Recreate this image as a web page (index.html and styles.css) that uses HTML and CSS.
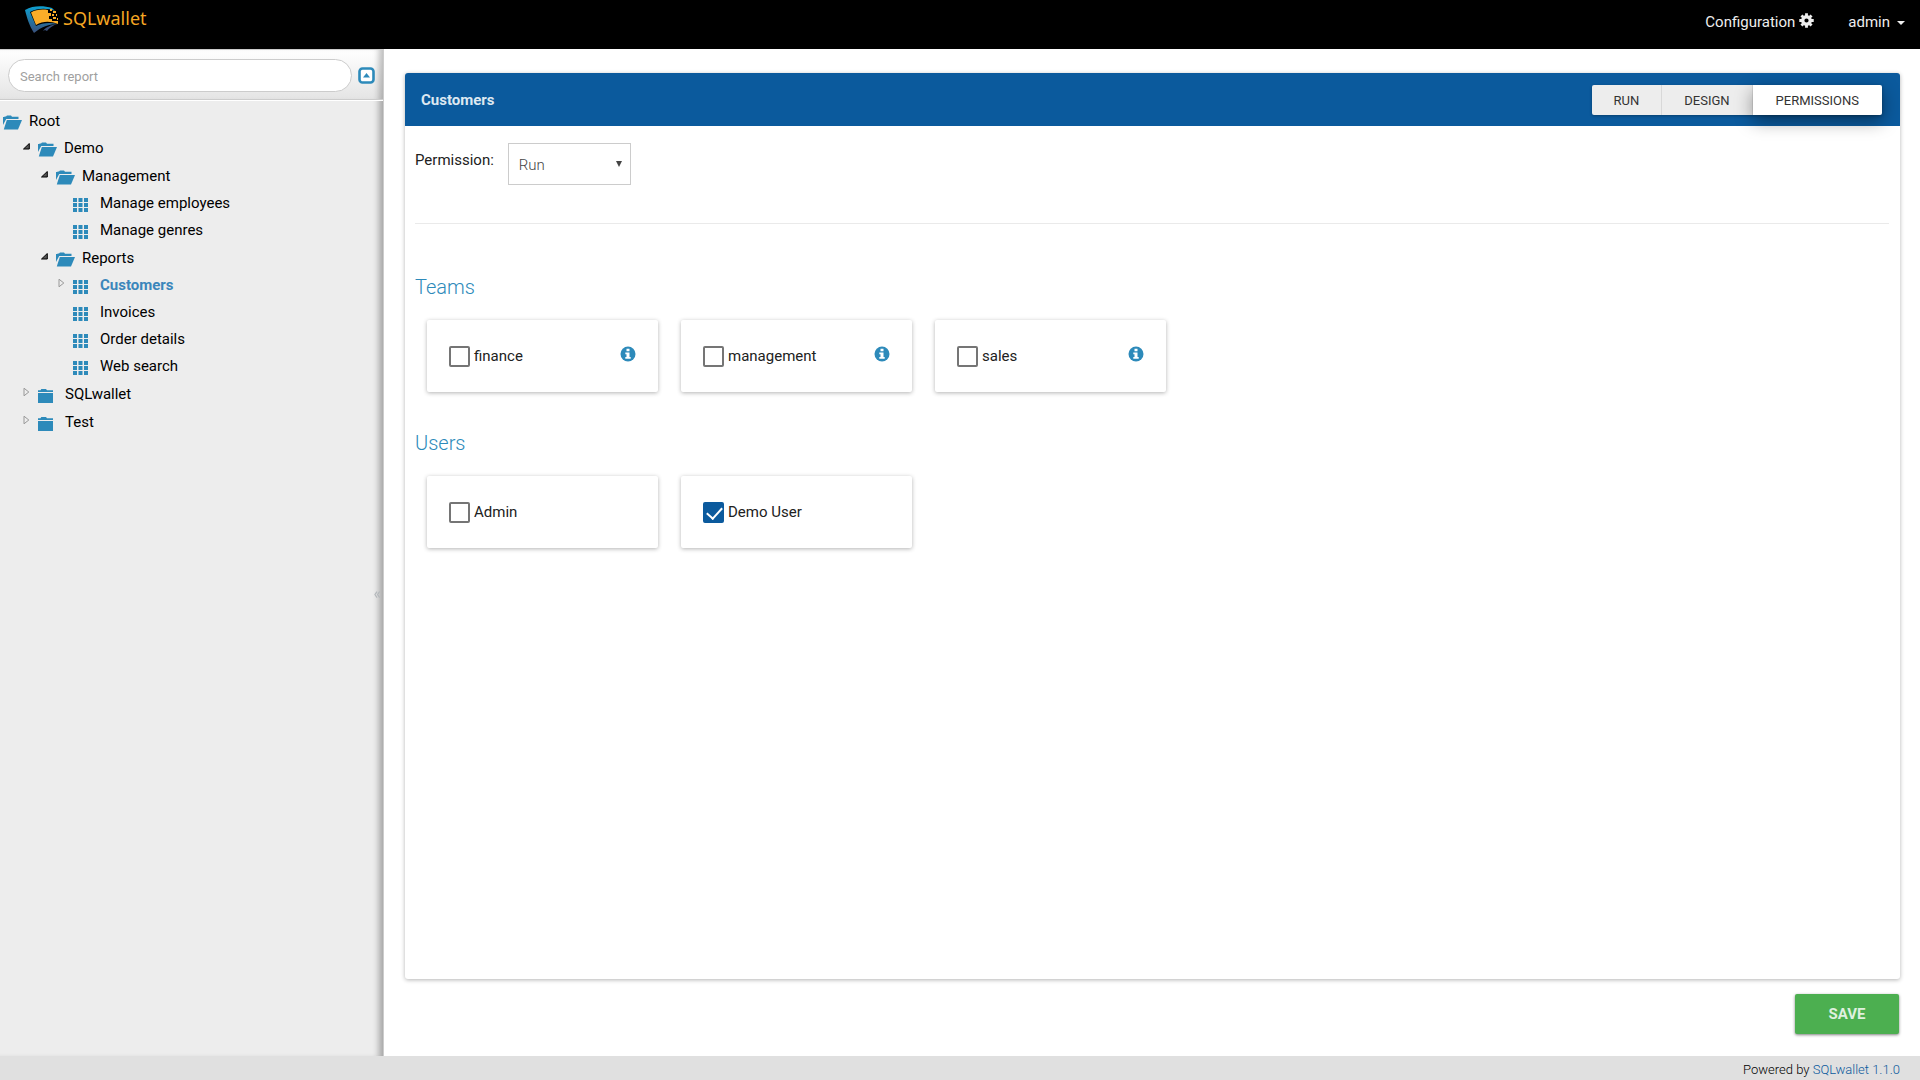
FILE: index.html
```html
<!DOCTYPE html>
<html lang="en">
<head>
<meta charset="utf-8">
<title>SQLwallet</title>
<link rel="stylesheet" href="styles.css">
</head>
<body>
<svg width="0" height="0" class="sprite" aria-hidden="true">
  <symbol id="folder-open" viewBox="0 0 19 15"><path d="M0 10V2h1.500V1.500h1.500L4 .5h4l1 1.300h6.500V4H3.200z"/><path d="M3.800 5H19l-4 9.500H.8z"/></symbol>
  <symbol id="folder" viewBox="0 0 15 14"><path d="M0 3V1.200h2.500L3.300 0H8l1 1.200h6V3zM0 4h15v10H0z"/></symbol>
  <symbol id="grid" viewBox="0 0 15 14"><path d="M0 0h4v4H0zM5.500 0h4v4h-4zM11 0h4v4h-4zM0 5h4v4H0zM5.500 5h4v4h-4zM11 5h4v4h-4zM0 10h4v4H0zM5.500 10h4v4h-4zM11 10h4v4h-4z"/></symbol>
  <symbol id="arrow-open" viewBox="0 0 7 7"><path d="M6.300.5V6H.5z" fill="#555" stroke="#000"/></symbol>
  <symbol id="arrow-closed" viewBox="0 0 7 10"><path d="M1 1.200v7.600L5.800 5z" fill="none" stroke="#999"/></symbol>
  <symbol id="info" viewBox="0 0 16 16"><circle cx="8" cy="8" r="7.500"/><path d="M6.500 2.800h3v2.400h-3zM5.300 6.500h4.200v4.600h1.200v1.700H5.300v-1.700h1.200V8.200H5.300z" fill="#fff"/></symbol>
</svg>

<header class="topbar">
  <a class="brand" href="#">
    <svg class="brand-mark" viewBox="0 0 34 28" aria-hidden="true">
      <defs><linearGradient id="wallet" x1="0" y1="0" x2="0" y2="1"><stop offset="0" stop-color="#0e9fd0"/><stop offset="1" stop-color="#3a4f7a"/></linearGradient></defs>
      <path d="M0 4C8-.5 18-.5 27 2l3 3C22 2 13 2 5 6l6 14c6-3 13-4 22-2-9 0-17 3-24 9C4 19 2 12 0 4z" fill="url(#wallet)"/>
      <path d="M18 25c3-4 8-6 14-7-5 2-8 4-10 7l-2-1z" fill="#3a4f7a"/>
      <path d="M6 6.500c5-3 11-3.500 17-2.500v3h3v3h-2v3h3v2h6v3c-8-3-15-3-22 1z" fill="#fbae29"/>
      <path d="M25 3h2v2h-2zM28 5h3v2h-3zM27 8h2v2h-2zM31 8h1v2h-1zM28 11h3v2h-3zM32 12h1v2h-1z" fill="#fbae29"/>
    </svg>
    <span>SQLwallet</span>
  </a>
  <nav class="top-links">
    <a href="#">Configuration
      <svg class="gear" viewBox="0 0 16 16" aria-hidden="true"><circle cx="8" cy="8" r="4" fill="none" stroke="currentColor" stroke-width="3.500"/><path d="M8 .3v3M8 12.700v3M.3 8h3M12.700 8h3M2.600 2.600l2 2M11.400 11.400l2 2M2.600 13.400l2-2M11.400 4.600l2-2" stroke="currentColor" stroke-width="3"/></svg>
    </a>
    <a href="#">admin <i class="caret"></i></a>
  </nav>
</header>

<div class="workspace">
  <aside class="sidebar">
    <form class="search">
      <input type="text" placeholder="Search report" aria-label="Search report">
      <button type="button" aria-label="Collapse all">
        <svg viewBox="0 0 17 17" aria-hidden="true"><rect x="1.500" y="1.500" width="14" height="14" rx="3" fill="#fff" stroke="currentColor" stroke-width="2.600"/><path d="M5 10.500h7L8.500 6z" fill="currentColor"/></svg>
      </button>
    </form>
    <ul class="tree">
      <li class="folder"><a href="#"><svg class="open"><use href="#folder-open"/></svg>Root</a>
        <ul>
          <li class="folder"><a href="#"><svg class="arrow"><use href="#arrow-open"/></svg><svg class="open"><use href="#folder-open"/></svg>Demo</a>
            <ul>
              <li class="folder"><a href="#"><svg class="arrow"><use href="#arrow-open"/></svg><svg class="open"><use href="#folder-open"/></svg>Management</a>
                <ul>
                  <li><a href="#"><i class="arrow"></i><svg><use href="#grid"/></svg>Manage employees</a></li>
                  <li><a href="#"><i class="arrow"></i><svg><use href="#grid"/></svg>Manage genres</a></li>
                </ul>
              </li>
              <li class="folder"><a href="#"><svg class="arrow"><use href="#arrow-open"/></svg><svg class="open"><use href="#folder-open"/></svg>Reports</a>
                <ul>
                  <li><a href="#" class="current"><svg class="arrow closed"><use href="#arrow-closed"/></svg><svg><use href="#grid"/></svg>Customers</a></li>
                  <li><a href="#"><i class="arrow"></i><svg><use href="#grid"/></svg>Invoices</a></li>
                  <li><a href="#"><i class="arrow"></i><svg><use href="#grid"/></svg>Order details</a></li>
                  <li><a href="#"><i class="arrow"></i><svg><use href="#grid"/></svg>Web search</a></li>
                </ul>
              </li>
            </ul>
          </li>
          <li class="folder"><a href="#"><svg class="arrow closed"><use href="#arrow-closed"/></svg><svg><use href="#folder"/></svg>SQLwallet</a></li>
          <li class="folder"><a href="#"><svg class="arrow closed"><use href="#arrow-closed"/></svg><svg><use href="#folder"/></svg>Test</a></li>
        </ul>
      </li>
    </ul>
    <button class="collapse" type="button" aria-label="Hide sidebar"><svg viewBox="0 0 5 6" aria-hidden="true"><path d="M2.500.5L.8 3l1.700 2.500M4.700.5L3 3l1.700 2.500" fill="none" stroke="#b4b8bc"/></svg></button>
  </aside>

  <main class="main">
    <section class="panel">
      <div class="panel-head">
        <h1>Customers</h1>
        <div class="tabs">
          <button type="button">RUN</button>
          <button type="button">DESIGN</button>
          <button type="button" class="active">PERMISSIONS</button>
        </div>
      </div>
      <div class="panel-body">
        <div class="permission">
          <label for="permission">Permission:</label>
          <div class="select"><select id="permission"><option>Run</option></select></div>
        </div>
        <h2>Teams</h2>
        <div class="cards">
          <div class="card"><label><input type="checkbox">finance</label><svg class="info"><use href="#info"/></svg></div>
          <div class="card"><label><input type="checkbox">management</label><svg class="info"><use href="#info"/></svg></div>
          <div class="card"><label><input type="checkbox">sales</label><svg class="info"><use href="#info"/></svg></div>
        </div>
        <h2>Users</h2>
        <div class="cards">
          <div class="card"><label><input type="checkbox">Admin</label></div>
          <div class="card"><label><input type="checkbox" checked>Demo User</label></div>
        </div>
      </div>
    </section>
    <button class="save" type="button">SAVE</button>
  </main>
</div>

<footer class="footer">Powered by <a href="#">SQLwallet 1.1.0</a></footer>
</body>
</html>
```
FILE: styles.css
```css
* { box-sizing: border-box; }

body {
  margin: 0;
  min-height: 100vh;
  display: flex;
  flex-direction: column;
  font: 15px/20px Roboto, sans-serif;
  color: #212121;
  background: #fff;
}

a { color: inherit; text-decoration: none; }
button, input, select { font: inherit; color: inherit; }
ul { list-style: none; margin: 0; padding: 0; }
.sprite { position: absolute; }

/* Top bar */
.topbar {
  display: flex;
  justify-content: space-between;
  height: 49px;
  padding: 0 15px 0 25px;
  background: #000;
}
.brand {
  display: flex;
  align-items: flex-start;
  gap: 4px;
  padding-top: 6px;
  font: 18px/25px "Noto Sans", sans-serif;
  color: #f5a623;
}
.brand-mark { width: 34px; height: 28px; }
.top-links { display: flex; gap: 34px; padding-top: 12px; color: #eee; }
.top-links a { display: flex; align-items: center; gap: 4px; height: 20px; }
.gear { width: 15px; height: 15px; margin-bottom: 3px; }
.caret {
  margin: 2px 0 0 3px;
  border: 4px solid transparent;
  border-top-color: currentColor;
  border-bottom: 0;
}

/* Sidebar */
.workspace { flex: 1; display: flex; }
.sidebar {
  position: relative;
  width: 384px;
  background: #ededed;
  border-right: 1px solid #ccc;
  box-shadow: inset -8px 0 6px -4px rgba(0, 0, 0, .3);
}
.search {
  display: flex;
  align-items: center;
  gap: 6px;
  height: 52px;
  padding: 0 8px;
  background: linear-gradient(#fff, #e4e4e4);
  border-top: 1px solid #ccc;
  border-bottom: 1px solid #fff;
  box-shadow: inset 0 -1px #ccc, inset -8px 0 6px -4px rgba(0, 0, 0, .25);
}
.search input {
  flex: 1;
  min-width: 0;
  height: 33px;
  padding: 2px 11px 0;
  font-size: 13px;
  border: 1px solid #ccc;
  border-radius: 17px;
  background: #fff;
}
.search input::placeholder { color: #a0a0a0; }
.search button { width: 17px; height: 17px; padding: 0; border: 0; background: none; color: #2d8aba; }
.search svg { display: block; }

.tree { padding: 6px 0 0 3px; color: #000; }
.tree ul { padding-left: 18px; }
.tree ul ul ul { padding-left: 17px; }
.tree .folder .folder .folder, .tree .folder + .folder { margin-top: 1px; }
.tree a { display: flex; align-items: center; height: 27px; }
.tree svg { width: 15px; height: 14px; margin: 4px 12px 0 0; fill: #2d8aba; }
.tree .open { width: 19px; height: 15px; margin-right: 7px; }
.tree .arrow { width: 7px; height: 7px; margin: 0 8px 3px 2px; }
.tree .closed { height: 10px; }
.tree .current { font-weight: 700; color: #3b86bb; }
.collapse {
  position: absolute;
  top: 53%;
  right: 3px;
  width: 6px;
  padding: 0;
  border: 0;
  background: none;
}

/* Main area */
.main {
  flex: 1;
  display: flex;
  flex-direction: column;
  padding: 24px 20px 22px 21px;
}
.panel {
  flex: 1;
  border-radius: 3px;
  box-shadow: 0 1px 4px rgba(0, 0, 0, .3);
}
.panel-head {
  display: flex;
  justify-content: space-between;
  align-items: center;
  height: 53px;
  padding: 0 18px 0 16px;
  border-radius: 3px 3px 0 0;
  background: #0b5a9d;
  color: #dde8f1;
}
.panel-head h1 { margin: 0; font-size: 15px; font-weight: 700; }
.tabs { display: flex; box-shadow: 0 1px 3px rgba(0, 0, 0, .3); border-radius: 2px; }
.tabs button {
  height: 30px;
  padding: 2px 22px 0;
  border: 0;
  border-right: 1px solid #d8d8d8;
  background: #ededed;
  font-size: 13px;
  color: #333;
}
.tabs button:first-child { border-radius: 2px 0 0 2px; }
.tabs .active {
  padding: 2px 23px 0;
  border-right: 0;
  border-radius: 0 2px 2px 0;
  background: #fff;
  box-shadow: 0 6px 18px rgba(0, 0, 0, .4);
}

.panel-body { padding: 17px 11px 17px 10px; }
.permission {
  display: flex;
  align-items: flex-start;
  gap: 14px;
  height: 81px;
  border-bottom: 1px solid #eaeaea;
}
.permission label { padding-top: 7px; }
.select { position: relative; }
.select select {
  appearance: none;
  width: 123px;
  height: 42px;
  padding: 2px 10px 0;
  border: 1px solid #ccc;
  border-radius: 0;
  background: #fff;
  font-weight: 300;
  color: #444;
}
.select::after {
  content: "";
  position: absolute;
  top: 18px;
  right: 9px;
  border: 3px solid transparent;
  border-top: 6px solid #444;
  border-bottom: 0;
}
h2 {
  margin: 40px 0 18px;
  font-size: 20px;
  line-height: 22px;
  font-weight: 300;
  color: #2d8aba;
}
.permission + h2 { margin-top: 52px; }
.cards {
  display: grid;
  grid-template-columns: repeat(auto-fill, 231px);
  gap: 23px;
  padding: 4px 0 0 12px;
}
.card {
  display: flex;
  justify-content: space-between;
  align-items: center;
  height: 72px;
  padding: 0 22px;
  border-radius: 2px;
  background: #fff;
  box-shadow: 0 1px 4px rgba(0, 0, 0, .3);
}
.card label { display: flex; align-items: center; gap: 4px; }
.card input {
  appearance: none;
  width: 21px;
  height: 21px;
  margin: 0;
  border: 2px solid #757575;
  border-radius: 2px;
}
.card input:checked { border-color: #0b5a9d; background: #0b5a9d; }
.card input:checked::after {
  content: "";
  display: block;
  width: 7px;
  height: 13px;
  margin: 0 5px;
  border: solid #fff;
  border-width: 0 2px 2px 0;
  transform: rotate(42deg);
}
.info { width: 16px; height: 16px; margin-bottom: 4px; fill: #2d8aba; }
.save {
  align-self: flex-end;
  width: 104px;
  height: 40px;
  margin: 15px 1px 0 0;
  border: 0;
  border-radius: 2px;
  background: #4caf50;
  box-shadow: 0 1px 3px rgba(0, 0, 0, .5);
  font-weight: 700;
  color: #dff0df;
}

.footer {
  height: 24px;
  padding: 4px 20px 0;
  background: #e0e0e0;
  text-align: right;
  font-size: 13px;
  font-weight: 300;
  color: #000;
}
.footer a { color: #0b5a9d; }
```
